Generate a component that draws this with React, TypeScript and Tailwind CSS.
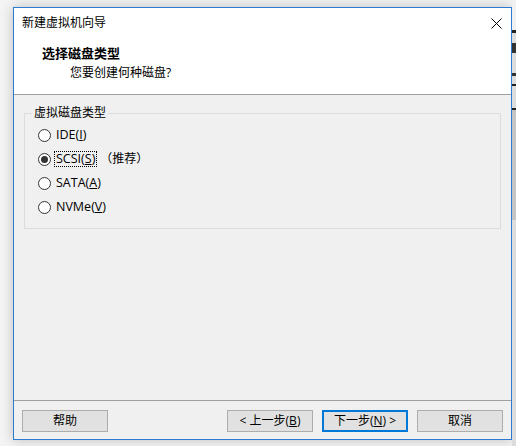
import React from "react";

const font = { fontFamily: '"Open Sans", "Noto Sans CJK SC", sans-serif' };

function Radio({ checked, children, focus, extra }: { checked?: boolean; children: React.ReactNode; focus?: boolean; extra?: React.ReactNode }) {
  return (
    <div className="flex items-center h-[24px]">
      <span className="relative w-[13px] h-[13px] rounded-full border border-[#333333] bg-white flex items-center justify-center ml-[13px]">
        {checked && <span className="w-[7px] h-[7px] rounded-full bg-[#333333]" />}
      </span>
      <span className="ml-[3px] flex items-center">
        <span className={focus ? "border border-dotted border-black px-[1px] leading-[14px] text-[12.5px]" : "px-[2px] leading-[16px] text-[12.5px]"}>{children}</span>
        {extra}
      </span>
    </div>
  );
}

function Btn({ children, def }: { children: React.ReactNode; def?: boolean }) {
  return (
    <div
      className={
        "w-[86px] h-[22px] flex items-center justify-center bg-[#e1e1e1] text-[12px] text-black " +
        (def ? "border-2 border-[#0078d7]" : "border border-[#adadad]")
      }
    >
      {children}
    </div>
  );
}

export default function App() {
  return (
    <div className="w-[516px] h-[446px] bg-[#f4f4f4] flex overflow-hidden" style={font}>
      <div className="w-[13px] shrink-0" />
      <div className="pt-[7px] shrink-0">
        <div className="w-[499px] h-[433px] border border-[#2b7bd1] bg-[#f0f0f0] flex flex-col shadow-[0_0_12px_rgba(0,0,0,0.22)] text-[12px] text-black">
          {/* title bar */}
          <div className="h-[30px] bg-white flex items-center justify-between pl-[8px] pr-[9px]">
            <span className="leading-[16px]">新建虚拟机向导</span>
            <svg width="11" height="11" viewBox="0 0 11 11">
              <path d="M0.5 0.5 L10.5 10.5 M10.5 0.5 L0.5 10.5" stroke="#000" strokeWidth="1" fill="none" />
            </svg>
          </div>
          {/* header */}
          <div className="h-[57px] bg-white border-b border-[#a0a0a0] flex flex-col pl-[28px] pt-[6px]">
            <span className="font-bold text-[13px] leading-[18px]">选择磁盘类型</span>
            <span className="pl-[28px] leading-[16px] mt-[3px]">您要创建何种磁盘?</span>
          </div>
          {/* body */}
          <div className="flex-1 px-[10px] pt-[10px]">
            <fieldset className="border border-[#dcdcdc] h-[124px] pt-[2px]">
              <legend className="ml-[7px] px-[2px] leading-[16px]">虚拟磁盘类型</legend>
              <Radio>
                IDE(<u>I</u>)
              </Radio>
              <Radio checked focus extra={<span className="ml-[3px] leading-[16px]">（推荐）</span>}>
                SCSI(<u>S</u>)
              </Radio>
              <Radio>
                SATA(<u>A</u>)
              </Radio>
              <Radio>
                NVMe(<u>V</u>)
              </Radio>
            </fieldset>
          </div>
          {/* footer */}
          <div className="h-[39px] border-t border-[#a0a0a0] flex items-start pt-[9px] px-[8px]">
            <Btn>帮助</Btn>
            <div className="flex-1" />
            <div className="flex gap-[9px]">
              <Btn>
                &lt; 上一步(<u>B</u>)
              </Btn>
              <Btn def>
                下一步(<u>N</u>) &gt;
              </Btn>
              <Btn>取消</Btn>
            </div>
          </div>
        </div>
      </div>
      <div className="w-[4px] shrink-0 flex flex-col bg-[#dcdcdc]">
        <div className="h-[30px] bg-[#f0f0f0]" />
        <div className="h-[3px] bg-[#222]" />
        <div className="h-[10px]" />
        <div className="h-[10px] bg-[#333]" />
        <div className="h-[20px]" />
        <div className="h-[3px] bg-[#333]" />
        <div className="h-[8px]" />
        <div className="h-[26px] border-y-2 border-[#222]" />
        <div className="h-[110px] bg-[#c4c4c4]" />
      </div>
    </div>
  );
}
